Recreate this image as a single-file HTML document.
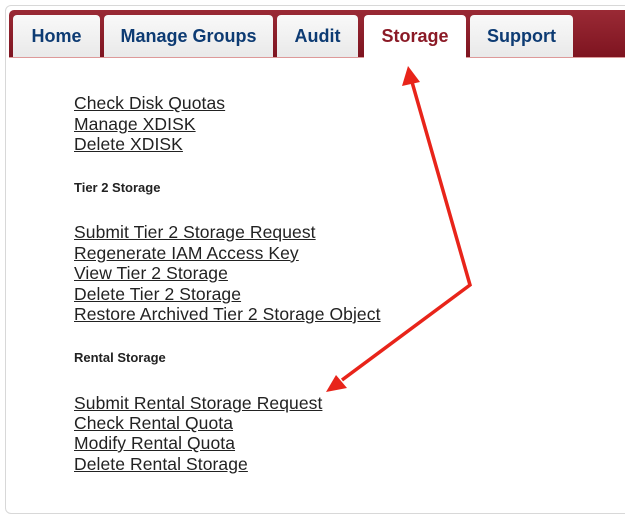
<!DOCTYPE html>
<html><head><style>
body{margin:0;width:625px;height:526px;background:#fff;position:relative;overflow:hidden;font-family:"Liberation Sans",Arial,sans-serif}
.panel{position:absolute;left:5px;top:5px;width:640px;height:507px;border:1px solid #d8d8d8;border-radius:6px}
.bar{position:absolute;left:9px;top:10px;width:640px;height:47px;background:linear-gradient(#9a2a35,#7e1420);border-radius:5px 0 0 0;border-bottom:1px solid #d99}
.tab{position:absolute;top:15px;height:42px;background:linear-gradient(#f9f9f9,#e9e9e9);border-radius:4px 4px 0 0;color:#0d3b73;font-weight:bold;font-size:18px;text-align:center;line-height:42px}
.tab.act{background:#fff;color:#8b1a26;height:43px}
.l{position:absolute;left:74px;font-size:17.5px;letter-spacing:0.08px;color:#222;text-decoration:underline;line-height:20px;white-space:nowrap}
.h{position:absolute;left:74px;font-size:13px;font-weight:bold;color:#222;line-height:16px}
</style></head><body>
<div class="panel"></div>
<div class="bar"></div>
<div class="tab" style="left:13px;width:87px">Home</div>
<div class="tab" style="left:104px;width:169px">Manage Groups</div>
<div class="tab" style="left:277px;width:81px">Audit</div>
<div class="tab act" style="left:364px;width:102px">Storage</div>
<div class="tab" style="left:470px;width:103px">Support</div>
<div class="l" style="top:93px">Check Disk Quotas</div>
<div class="l" style="top:114px">Manage XDISK</div>
<div class="l" style="top:134px">Delete XDISK</div>
<div class="h" style="top:180px">Tier 2 Storage</div>
<div class="l" style="top:222px">Submit Tier 2 Storage Request</div>
<div class="l" style="top:243px">Regenerate IAM Access Key</div>
<div class="l" style="top:263px">View Tier 2 Storage</div>
<div class="l" style="top:284px">Delete Tier 2 Storage</div>
<div class="l" style="top:304px">Restore Archived Tier 2 Storage Object</div>
<div class="h" style="top:350px">Rental Storage</div>
<div class="l" style="top:393px">Submit Rental Storage Request</div>
<div class="l" style="top:413px">Check Rental Quota</div>
<div class="l" style="top:433px">Modify Rental Quota</div>
<div class="l" style="top:454px">Delete Rental Storage</div>
<svg style="position:absolute;left:0;top:0" width="625" height="526">
<polyline points="412,82 470,285 342,380" fill="none" stroke="#e8241a" stroke-width="3.5"/>
<polygon points="408,66 402,86 420,82" fill="#e8241a"/>
<polygon points="326,392 347,388 336,375" fill="#e8241a"/>
</svg>
</body></html>
